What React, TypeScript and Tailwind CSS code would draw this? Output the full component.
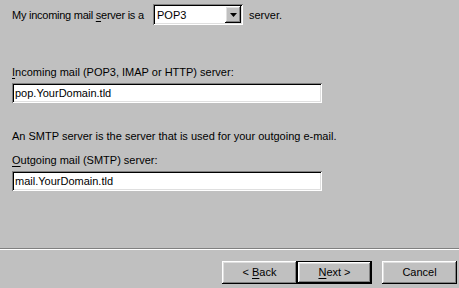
const raised =
  'shadow-[inset_-1px_-1px_#000,inset_1px_1px_#fff,inset_-2px_-2px_#808080,inset_2px_2px_#dfdfdf]';
const sunken =
  'shadow-[inset_1px_1px_#808080,inset_-1px_-1px_#fff,inset_2px_2px_#000,inset_-2px_-2px_#dfdfdf]';

function Key({ children }: { children: string }) {
  return <span className="underline underline-offset-[2px]">{children}</span>;
}

function Field({ value }: { value: string }) {
  return (
    <div className={`mt-[4px] flex h-[20px] w-[310px] items-center bg-white pl-[3px] ${sunken}`}>
      <span className="leading-[13px]">{value}</span>
    </div>
  );
}

function Button({ children, primary }: { children: React.ReactNode; primary?: boolean }) {
  const label = <span className="whitespace-pre">{children}</span>;
  if (primary) {
    return (
      <div className="h-[23px] w-[75px] border border-black">
        <div className={`flex h-full w-full items-center justify-center ${raised}`}>{label}</div>
      </div>
    );
  }
  return (
    <div className={`flex h-[23px] w-[75px] items-center justify-center ${raised}`}>{label}</div>
  );
}

export default function App() {
  return (
    <div className="flex h-[288px] w-[459px] flex-col bg-[#c0c0c0] font-['Liberation_Sans',Arial,sans-serif] text-[11px] leading-[13px] text-black">
      {/* ===== Server type ===== */}
      <div className="mt-[4px] flex h-[21px] items-center pl-[12px]">
        <span className="mt-[2px] w-[141px] tracking-[-0.25px]">
          My incoming mail <Key>s</Key>erver is a
        </span>
        <div className={`flex h-[21px] w-[90px] items-center bg-white pl-[4px] pr-[2px] ${sunken}`}>
          <span className="mt-[1px] flex-1">POP3</span>
          <div className={`flex h-[17px] w-[16px] items-center justify-center bg-[#c0c0c0] ${raised}`}>
            <svg width="7" height="4" viewBox="0 0 7 4">
              <path d="M0 0h7L3.5 4z" fill="#000" />
            </svg>
          </div>
        </div>
        <span className="ml-[6px] mt-[2px]">server.</span>
      </div>

      {/* ===== Servers ===== */}
      <div className="flex flex-col pl-[12px]">
        <span className="mt-[41px]">
          <Key>I</Key>ncoming mail (POP3, IMAP or HTTP) server:
        </span>
        <Field value="pop.YourDomain.tld" />
        <span className="mt-[27px]">An SMTP server is the server that is used for your outgoing e-mail.</span>
        <span className="mt-[11px]">
          <Key>O</Key>utgoing mail (SMTP) server:
        </span>
        <Field value="mail.YourDomain.tld" />
      </div>

      {/* ===== Footer ===== */}
      <div className="mt-auto h-[2px] border-t border-b border-t-[#808080] border-b-white" />
      <div className="mb-[4px] mt-[11px] flex justify-end pr-[2px]">
        <Button>
          {'< '}
          <Key>B</Key>ack
        </Button>
        <Button primary>
          <Key>N</Key>
          {'ext >'}
        </Button>
        <div className="ml-[10px]">
          <Button>Cancel</Button>
        </div>
      </div>
    </div>
  );
}
